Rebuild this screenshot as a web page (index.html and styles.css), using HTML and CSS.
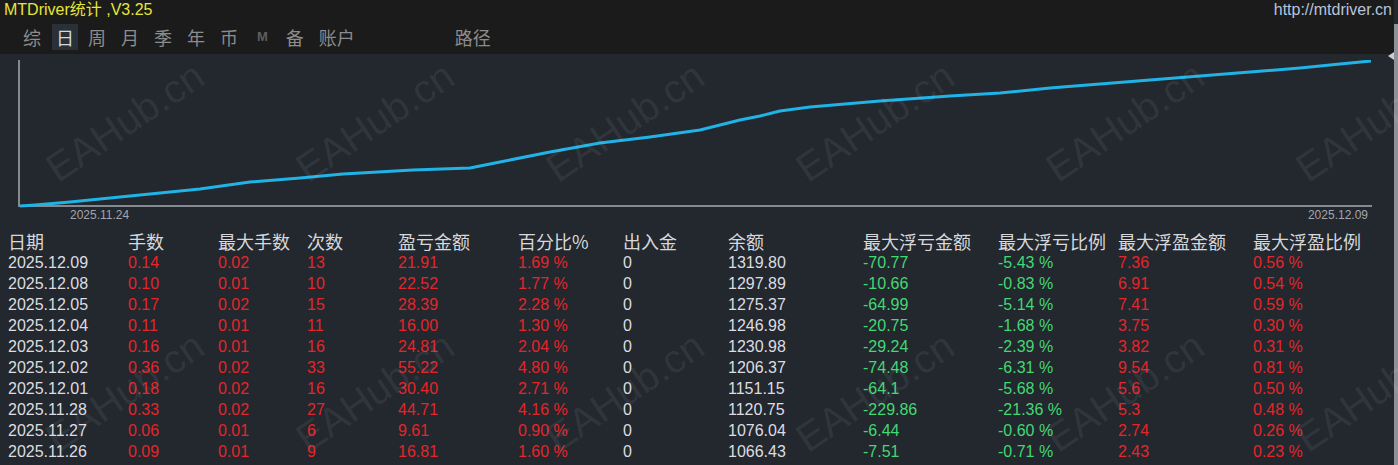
FILE: index.html
```html
<!DOCTYPE html>
<html lang="zh-CN">
<head>
    <meta charset="UTF-8">
    <title>MTDriver统计</title>
    <link rel="stylesheet" href="styles.css">
</head>
<body>
    <div class="app">
        <div class="main">
            <div class="top">
                <div class="titlebar">
                    <span class="title">MTDriver统计 ,V3.25</span>
                    <span class="site">http://mtdriver.cn</span>
                </div>
                <div class="tabs">
                    <span class="tab">综</span>
                    <span class="tab active">日</span>
                    <span class="tab">周</span>
                    <span class="tab">月</span>
                    <span class="tab">季</span>
                    <span class="tab">年</span>
                    <span class="tab">币</span>
                    <span class="tab tab-m">M</span>
                    <span class="tab">备</span>
                    <span class="tab">账户</span>
                    <span class="tab tab-path">路径</span>
                </div>
            </div>

            <div class="chart">
                <svg class="curve" width="1356" height="148" viewBox="0 0 1356 148">
                    <line x1="1" y1="0" x2="1" y2="147" stroke="#858a91" stroke-width="2"/>
                    <line x1="0" y1="146" x2="1354" y2="146" stroke="#858a91" stroke-width="2"/>
                    <polyline fill="none" stroke="#21b2e6" stroke-width="3" stroke-linejoin="round"
                        points="2,146 17,145 52,142 112,136 182,129 232,122 282,118 325,114 395,110 452,108 482,102 532,92 582,83 632,77 682,70 722,60 742,56 762,51 792,47 862,41 932,36 982,33 1032,28 1082,24 1132,20 1182,16 1232,12 1282,8 1322,4 1353,1"/>
                </svg>
                <div class="axis">
                    <span>2025.11.24</span>
                    <span>2025.12.09</span>
                </div>
            </div>

            <div class="table">
                <div class="row head">
                    <span>日期</span><span>手数</span><span>最大手数</span><span>次数</span><span>盈亏金额</span><span>百分比%</span><span>出入金</span><span>余额</span><span>最大浮亏金额</span><span>最大浮亏比例</span><span>最大浮盈金额</span><span>最大浮盈比例</span>
                </div>
                <div class="row">
                    <span>2025.12.09</span><span class="red">0.14</span><span class="red">0.02</span><span class="red">13</span><span class="red">21.91</span><span class="red">1.69 %</span><span>0</span><span>1319.80</span><span class="green">-70.77</span><span class="green">-5.43 %</span><span class="red">7.36</span><span class="red">0.56 %</span>
                </div>
                <div class="row">
                    <span>2025.12.08</span><span class="red">0.10</span><span class="red">0.01</span><span class="red">10</span><span class="red">22.52</span><span class="red">1.77 %</span><span>0</span><span>1297.89</span><span class="green">-10.66</span><span class="green">-0.83 %</span><span class="red">6.91</span><span class="red">0.54 %</span>
                </div>
                <div class="row">
                    <span>2025.12.05</span><span class="red">0.17</span><span class="red">0.02</span><span class="red">15</span><span class="red">28.39</span><span class="red">2.28 %</span><span>0</span><span>1275.37</span><span class="green">-64.99</span><span class="green">-5.14 %</span><span class="red">7.41</span><span class="red">0.59 %</span>
                </div>
                <div class="row">
                    <span>2025.12.04</span><span class="red">0.11</span><span class="red">0.01</span><span class="red">11</span><span class="red">16.00</span><span class="red">1.30 %</span><span>0</span><span>1246.98</span><span class="green">-20.75</span><span class="green">-1.68 %</span><span class="red">3.75</span><span class="red">0.30 %</span>
                </div>
                <div class="row">
                    <span>2025.12.03</span><span class="red">0.16</span><span class="red">0.01</span><span class="red">16</span><span class="red">24.81</span><span class="red">2.04 %</span><span>0</span><span>1230.98</span><span class="green">-29.24</span><span class="green">-2.39 %</span><span class="red">3.82</span><span class="red">0.31 %</span>
                </div>
                <div class="row">
                    <span>2025.12.02</span><span class="red">0.36</span><span class="red">0.02</span><span class="red">33</span><span class="red">55.22</span><span class="red">4.80 %</span><span>0</span><span>1206.37</span><span class="green">-74.48</span><span class="green">-6.31 %</span><span class="red">9.54</span><span class="red">0.81 %</span>
                </div>
                <div class="row">
                    <span>2025.12.01</span><span class="red">0.18</span><span class="red">0.02</span><span class="red">16</span><span class="red">30.40</span><span class="red">2.71 %</span><span>0</span><span>1151.15</span><span class="green">-64.1</span><span class="green">-5.68 %</span><span class="red">5.6</span><span class="red">0.50 %</span>
                </div>
                <div class="row">
                    <span>2025.11.28</span><span class="red">0.33</span><span class="red">0.02</span><span class="red">27</span><span class="red">44.71</span><span class="red">4.16 %</span><span>0</span><span>1120.75</span><span class="green">-229.86</span><span class="green">-21.36 %</span><span class="red">5.3</span><span class="red">0.48 %</span>
                </div>
                <div class="row">
                    <span>2025.11.27</span><span class="red">0.06</span><span class="red">0.01</span><span class="red">6</span><span class="red">9.61</span><span class="red">0.90 %</span><span>0</span><span>1076.04</span><span class="green">-6.44</span><span class="green">-0.60 %</span><span class="red">2.74</span><span class="red">0.26 %</span>
                </div>
                <div class="row">
                    <span>2025.11.26</span><span class="red">0.09</span><span class="red">0.01</span><span class="red">9</span><span class="red">16.81</span><span class="red">1.60 %</span><span>0</span><span>1066.43</span><span class="green">-7.51</span><span class="green">-0.71 %</span><span class="red">2.43</span><span class="red">0.23 %</span>
                </div>
            </div>
        </div>

        <div class="edge"><span class="edge-arrow"></span></div>

        <!-- watermark layer -->
        <div class="marks">
            <span class="mark" style="left:125px; top:122px">EAHub.cn</span>
            <span class="mark" style="left:375px; top:122px">EAHub.cn</span>
            <span class="mark" style="left:625px; top:122px">EAHub.cn</span>
            <span class="mark" style="left:875px; top:122px">EAHub.cn</span>
            <span class="mark" style="left:1125px; top:122px">EAHub.cn</span>
            <span class="mark" style="left:1375px; top:122px">EAHub.cn</span>
            <span class="mark" style="left:125px; top:392px">EAHub.cn</span>
            <span class="mark" style="left:375px; top:392px">EAHub.cn</span>
            <span class="mark" style="left:625px; top:392px">EAHub.cn</span>
            <span class="mark" style="left:875px; top:392px">EAHub.cn</span>
            <span class="mark" style="left:1125px; top:392px">EAHub.cn</span>
            <span class="mark" style="left:1375px; top:392px">EAHub.cn</span>
        </div>
    </div>
</body>
</html>
```

FILE: styles.css
```css
body {
    margin: 0;
    background: #23272e;
    font-family: 'Liberation Sans', Arial, 'Noto Sans CJK SC', sans-serif;
    color: #dcdde0;
    overflow: hidden;
}
.app {
    position: relative;
    display: flex;
    width: 1398px;
    height: 465px;
    overflow: hidden;
}
.main {
    flex: 1;
    min-width: 0;
}
.top {
    background: #1b1b1b;
    height: 54px;
}
.titlebar {
    display: flex;
    justify-content: space-between;
    height: 20px;
    line-height: 20px;
    padding: 0 2px 0 4px;
    font-size: 16px;
}
.title {
    color: #e6e63a;
}
.site {
    color: #b6c4da;
}
.tabs {
    display: flex;
    align-items: center;
    height: 26px;
    margin-top: 4px;
    padding-left: 20px;
    font-family: 'Noto Sans CJK SC', sans-serif;
    font-size: 18px;
    color: #8c8c8c;
}
.tab {
    padding: 0 3px;
    margin-right: 9px;
    line-height: 26px;
}
.tab.active {
    background: #2a3038;
    color: #d4d8de;
    padding: 0 4px;
    margin: 0 7px 0 -1px;
}
.tab-m {
    font-family: 'Liberation Sans', sans-serif;
    font-size: 13px;
    font-weight: bold;
    color: #5e5e5e;
    padding: 0 6px 0 7px;
}
.tab-path {
    margin-left: 85px;
}
.chart {
    padding: 6px 0 0 18px;
}
.curve {
    display: block;
}
.axis {
    display: flex;
    justify-content: space-between;
    width: 1356px;
    box-sizing: border-box;
    padding: 0 6px 0 52px;
    height: 14px;
    line-height: 14px;
    font-size: 12px;
    color: #a2a6ac;
}
.table {
    margin-top: 9px;
    padding-left: 8px;
}
.row {
    display: grid;
    grid-template-columns: 120px 90px 89px 91px 120px 105px 105px 135px 135px 120px 135px 1fr;
    height: 21px;
    line-height: 21px;
    font-size: 16px;
    white-space: nowrap;
}
.row.head {
    font-family: 'Noto Sans CJK SC', sans-serif;
    font-size: 18px;
    color: #d6d8db;
}
.red {
    color: #e2262a;
}
.green {
    color: #42d872;
}
.edge {
    position: relative;
    width: 4px;
    margin-top: 24px;
    background: #8e9298;
}
.edge-arrow {
    position: absolute;
    left: -6px;
    top: 28px;
    width: 0;
    height: 0;
    border-top: 4px solid transparent;
    border-bottom: 4px solid transparent;
    border-right: 6px solid #c9ccd0;
}
.marks {
    position: absolute;
    inset: 0;
    pointer-events: none;
}
.mark {
    position: absolute;
    transform: translate(-50%, -50%) rotate(-34deg);
    font-family: 'Liberation Sans', sans-serif;
    font-size: 40px;
    color: rgba(255, 255, 255, 0.08);
    white-space: nowrap;
}
```
